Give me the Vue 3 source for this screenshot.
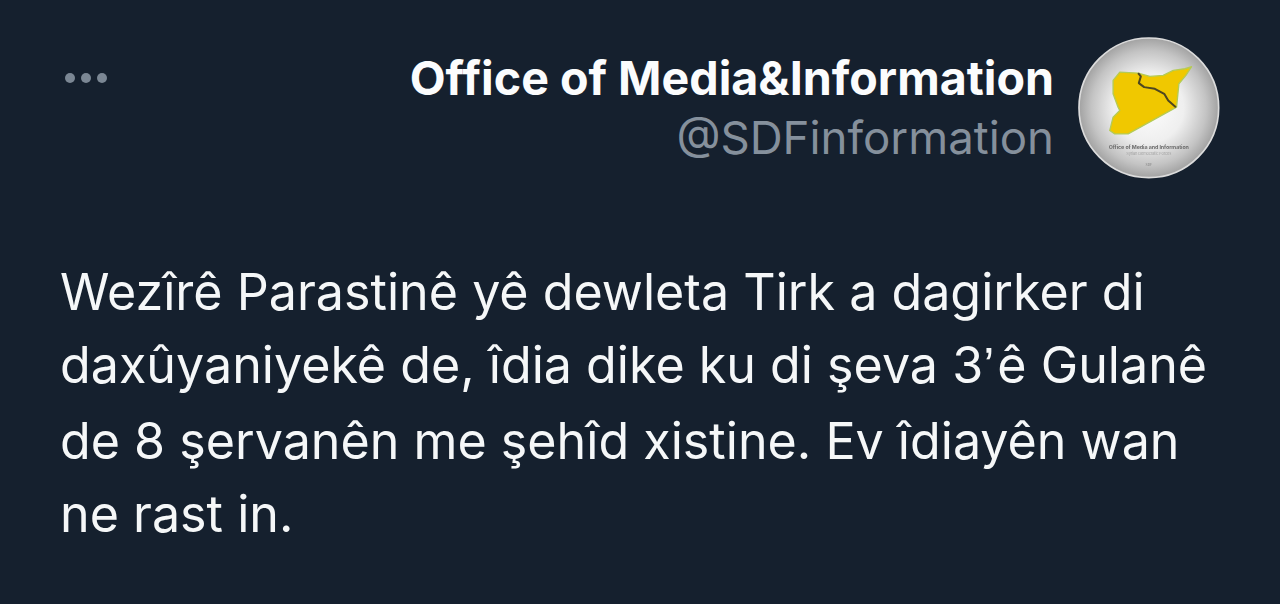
<template>
  <div class="tweet">
    <header class="top">
      <div class="dots">
        <span></span>
        <span></span>
        <span></span>
      </div>
      <div class="author">
        <div class="names">
          <div class="name">Office of Media&amp;Information</div>
          <div class="handle">@SDFinformation</div>
        </div>
        <svg class="avatar" viewBox="55 35 425 425">
          <defs>
            <radialGradient id="disc" cx="50%" cy="50%" r="50%">
              <stop offset="0%" stop-color="#fdfdfd" />
              <stop offset="50%" stop-color="#efefef" />
              <stop offset="82%" stop-color="#c4c4c4" />
              <stop offset="100%" stop-color="#a2a2a2" />
            </radialGradient>
            <filter id="soft"><feGaussianBlur stdDeviation="1.5" /></filter>
            <filter id="softer"><feGaussianBlur stdDeviation="2.2" /></filter>
          </defs>
          <circle cx="267" cy="247" r="209" fill="url(#disc)" stroke="#dcdcdc" stroke-width="5" />
          <g filter="url(#soft)">
            <path
              d="M235 143L180 140L160 165L160 205L175 245L180 255L160 275L150 315L165 325L205 325L350 245L357 175L378 150L395 124L375 130L340 135L310 150L270 153Z"
              fill="#f0c800"
              stroke="#b5cb55"
              stroke-width="4"
              stroke-linejoin="round"
            />
            <path
              d="M235 143L243 153L237 173L253 185L285 190L313 205L325 225L348 245"
              fill="none"
              stroke="#4e4620"
              stroke-width="6"
              stroke-linejoin="round"
            />
          </g>
          <g class="logo-text" filter="url(#softer)">
            <text x="267" y="371" font-size="16" font-weight="700" fill="#6e6e6e" textLength="240">Office of Media and Information</text>
            <text x="267" y="389" font-size="12" fill="#a4a4a4" textLength="135">Syrian Democratic Forces</text>
            <text x="267" y="422" font-size="10" fill="#808080">SDF</text>
          </g>
        </svg>
      </div>
    </header>
    <p class="body">
      Wezîrê Parastinê yê dewleta Tirk a dagirker di<br />
      daxûyaniyekê de, îdia dike ku di şeva 3<span class="apos">’</span>ê Gulanê<br />
      de 8 şervanên me şehîd xistine. Ev îdiayên wan<br />
      ne rast in.
    </p>
  </div>
</template>

<script setup>
</script>

<style>
body {
  margin: 0;
  background: #15202e;
}
</style>

<style scoped>
.tweet {
  box-sizing: border-box;
  width: 1280px;
  height: 604px;
  overflow: hidden;
  padding: 37px 60px 0 60px;
  background: #15202e;
  font-family: Inter, "Liberation Sans", sans-serif;
}

.top {
  display: flex;
  justify-content: space-between;
  align-items: flex-start;
}

.dots {
  display: flex;
  gap: 6px;
  margin: 36px 0 0 5px;
}

.dots span {
  width: 10px;
  height: 10px;
  border-radius: 50%;
  background: #7b8794;
}

.author {
  display: flex;
  align-items: flex-start;
  gap: 24px;
}

.names {
  display: flex;
  flex-direction: column;
  align-items: flex-end;
  padding-top: 11px;
}

.name {
  font-size: 46.6px;
  line-height: 60px;
  font-weight: 700;
  color: #fbfcfd;
  white-space: nowrap;
}

.handle {
  font-size: 45.6px;
  line-height: 60px;
  color: #85909c;
  white-space: nowrap;
}

.avatar {
  width: 142px;
  height: 142px;
  flex: none;
}

.logo-text {
  text-anchor: middle;
}

.body {
  margin: 75.5px 0 0;
  font-size: 50.2px;
  line-height: 73.5px;
  color: #f5f7f8;
  white-space: nowrap;
}

.apos {
  font-family: "Liberation Sans", sans-serif;
  margin-right: 3px;
}
</style>
